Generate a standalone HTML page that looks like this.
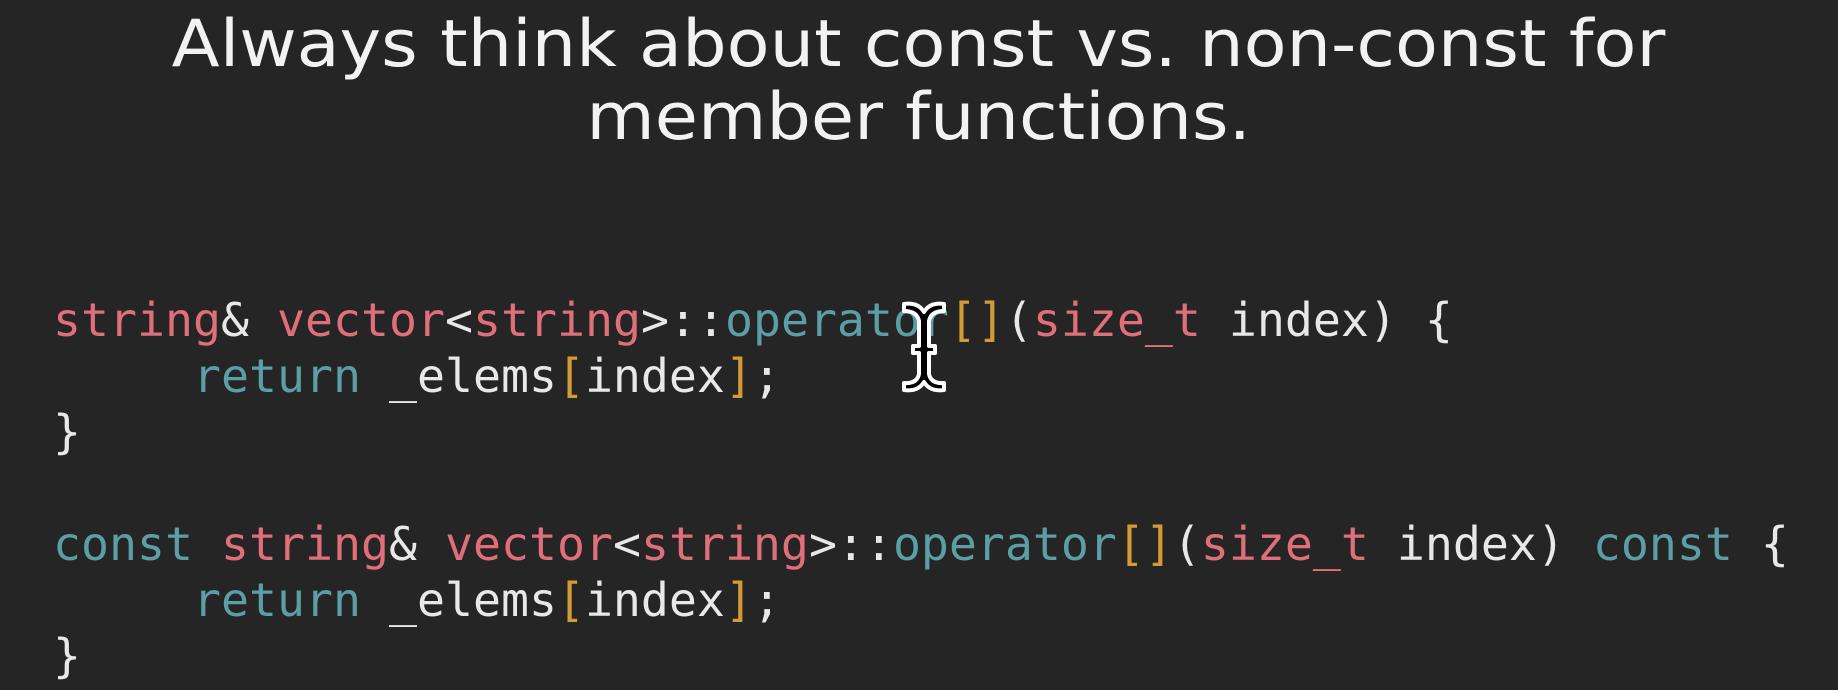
<!DOCTYPE html>
<html><head><meta charset="utf-8"><style>
html,body{margin:0;padding:0;}
body{width:1838px;height:690px;background:#252525;position:relative;overflow:hidden;}
.title{position:absolute;left:0;width:1838px;text-align:center;color:#f2f2f2;font-family:"DejaVu Sans","Liberation Sans",sans-serif;font-size:65px;white-space:nowrap;}
.title span{display:inline-block;transform:scaleX(1.08);}
.code{position:absolute;left:53px;font-family:"DejaVu Sans Mono","Liberation Mono",monospace;font-size:46.5px;white-space:pre;color:#e8e8e8;line-height:56px;}
.r{color:#e16f7a}.t{color:#5c9ea6}.o{color:#d39a38}
</style></head><body>
<div class="title" style="top:7px"><span>Always think about const vs. non-const for</span></div>
<div class="title" style="top:80px"><span>member functions.</span></div>
<div class="code" style="top:292px"><span class="r">string</span>&amp; <span class="r">vector</span>&lt;<span class="r">string</span>&gt;::<span class="t">operator</span><span class="o">[]</span>(<span class="r">size_t</span> index) {
     <span class="t">return</span> _elems<span class="o">[</span>index<span class="o">]</span>;
}</div>
<div class="code" style="top:516px"><span class="t">const</span> <span class="r">string</span>&amp; <span class="r">vector</span>&lt;<span class="r">string</span>&gt;::<span class="t">operator</span><span class="o">[]</span>(<span class="r">size_t</span> index) <span class="t">const</span> {
     <span class="t">return</span> _elems<span class="o">[</span>index<span class="o">]</span>;
}</div>
<svg style="position:absolute;left:898px;top:298px" width="52" height="98" viewBox="0 0 52 98">
<path d="M6 6 Q20 4 26 14 Q32 4 46 6 L46 13 Q33 13 31 23 L31 48 L37 48 L37 55 L31 55 L31 76 Q33 86 46 85 L46 92 Q32 94 26 84 Q20 94 6 92 L6 85 Q19 86 21 76 L21 55 L15 55 L15 48 L21 48 L21 23 Q19 13 6 13 Z" fill="#000" stroke="#fff" stroke-width="4" stroke-linejoin="round"/>
</svg>
</body></html>
